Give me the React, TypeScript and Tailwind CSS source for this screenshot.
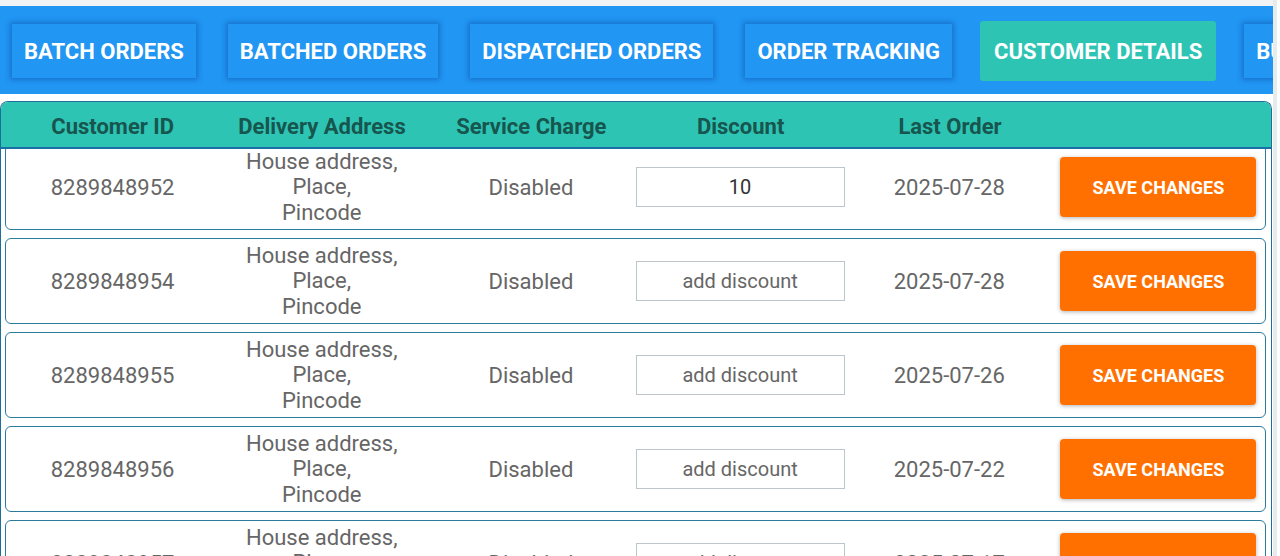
import { useState } from 'react';

const tabs = ['BATCH ORDERS', 'BATCHED ORDERS', 'DISPATCHED ORDERS', 'ORDER TRACKING', 'CUSTOMER DETAILS', 'BULK ORDERS'];

const customers = [
  { id: '8289848952', lastOrder: '2025-07-28', discount: '10' },
  { id: '8289848954', lastOrder: '2025-07-28', discount: '' },
  { id: '8289848955', lastOrder: '2025-07-26', discount: '' },
  { id: '8289848956', lastOrder: '2025-07-22', discount: '' },
  { id: '8289848957', lastOrder: '2025-07-17', discount: '' },
];

function CustomerRow({ id, lastOrder, discount }: { id: string; lastOrder: string; discount: string }) {
  const [value, setValue] = useState(discount);

  return (
    <div className="grid h-[86px] shrink-0 grid-cols-6 items-center rounded-[6px] border border-[#2a7c9c] bg-white px-[2px] text-center text-[22px] text-[#666]">
      <div>{id}</div>
      <div className="leading-[25.5px]">
        House address,
        <br />
        Place,
        <br />
        Pincode
      </div>
      <div>Disabled</div>
      <div className="flex justify-center">
        <input
          value={value}
          onChange={(e) => setValue(e.target.value)}
          placeholder="add discount"
          className="h-[40px] w-[209px] border border-[#bcc6cb] bg-white text-center text-[20px] text-[#333] outline-none placeholder:text-[#666]"
        />
      </div>
      <div>{lastOrder}</div>
      <div className="flex justify-center">
        <button className="h-[60px] w-[196px] rounded-[4px] bg-[#ff7000] text-[18px] font-bold text-white shadow-[0_1px_4px_rgba(0,0,0,0.3)]">
          SAVE CHANGES
        </button>
      </div>
    </div>
  );
}

export default function App() {
  const active = 'CUSTOMER DETAILS';

  return (
    <div className="flex h-[556px] w-[1280px] overflow-hidden bg-white font-['Roboto',sans-serif]">
      <div className="flex w-[1273px] shrink-0 flex-col">
        <div className="h-[6px] shrink-0 bg-[#f1f3f5]" />

        {/* Tabs */}
        <div className="flex h-[88px] shrink-0 items-center gap-8 overflow-hidden bg-[#2196f3] pl-3 pt-[2px]">
          {tabs.map((tab) =>
            tab === active ? (
              <button
                key={tab}
                className="-mx-1 h-[60px] shrink-0 rounded-[3px] bg-[#2ec4b4] px-[14px] text-[22px] font-bold text-white"
              >
                {tab}
              </button>
            ) : (
              <button
                key={tab}
                className="h-[54px] shrink-0 bg-[#2196f3] px-3 text-[22px] font-bold text-white shadow-[0_0_5px_2px_rgba(13,71,161,0.45)]"
              >
                {tab}
              </button>
            )
          )}
        </div>

        {/* Table */}
        <div className="mt-[7px] flex min-h-0 w-[1272px] flex-1 flex-col overflow-hidden rounded-t-[8px] border border-b-0 border-[#1d6f9a]">
          <div className="relative z-10 grid h-[47px] shrink-0 grid-cols-6 items-center border-b-2 border-[#1a6fa8] bg-[#2ec4b4] px-[7px] pt-[4px] text-center text-[22px] font-bold text-[#17554f]">
            <div>Customer ID</div>
            <div>Delivery Address</div>
            <div>Service Charge</div>
            <div>Discount</div>
            <div>Last Order</div>
            <div></div>
          </div>
          <div className="-mt-[5px] flex flex-col gap-[8px] pl-[4px] pr-[5px]">
            {customers.map((c) => (
              <CustomerRow key={c.id} {...c} />
            ))}
          </div>
        </div>
      </div>
      {/* page edge */}
      <div className="flex-1 border-l-4 border-[#e6ebee] bg-white" />
    </div>
  );
}
